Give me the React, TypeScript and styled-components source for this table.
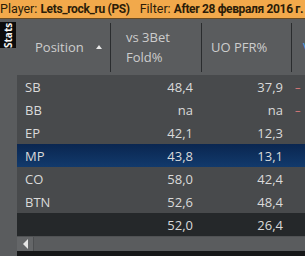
import React from "react";
import styled, { createGlobalStyle } from "styled-components";

const Global = createGlobalStyle`
  html, body { margin: 0; padding: 0; background: #1b1c1d; }
  * { box-sizing: border-box; }
`;

const Frame = styled.div`
  width: 305px;
  height: 256px;
  overflow: hidden;
  display: flex;
  flex-direction: column;
  background: #5a5c5e;
  font-family: "Open Sans", "Noto Sans", sans-serif;
`;

const TopBar = styled.div`
  height: 19px;
  flex: none;
  background: #f2a94b;
  border-bottom: 1px solid #6a4a20;
  color: #2b1c08;
  font-family: Roboto, "Open Sans", sans-serif;
  font-size: 12.5px;
  line-height: 18px;
  white-space: nowrap;
  overflow: hidden;
`;

const Strong = styled.b`
  font-weight: 700;
  font-size: 12px;
  letter-spacing: -0.35px;
`;

const Gap = styled.span`
  display: inline-block;
  width: 10px;
`;

const Body = styled.div`
  flex: 1;
  display: flex;
  min-height: 0;
`;

const Sidebar = styled.div`
  width: 17px;
  flex: none;
  background: #5a5c5e;
  padding-top: 3px;
`;

const StatsTab = styled.div`
  width: 16px;
  height: 26px;
  background: #0c0c0c;
  color: #f4f4f4;
  font-size: 10px;
  font-weight: 700;
  display: flex;
  align-items: center;
  justify-content: center;
  writing-mode: vertical-rl;
  transform: rotate(180deg);
  line-height: 16px;
`;

const Main = styled.div`
  flex: 1;
  display: flex;
  flex-direction: column;
  min-width: 0;
`;

const cols = "94px 91px 90px 1fr";

const HeaderRow = styled.div`
  height: 56px;
  display: grid;
  grid-template-columns: ${cols};
  background: #5a5c5e;
  color: #cdcdcd;
  font-size: 13px;
  line-height: 20px;
`;

const HeadCell = styled.div<{ $divider?: boolean; $pad?: number; $blue?: boolean }>`
  display: flex;
  align-items: center;
  padding-left: ${(p) => p.$pad ?? 8}px;
  white-space: nowrap;
  overflow: hidden;
  color: ${(p) => (p.$blue ? "#4aa0e8" : "inherit")};
  background: ${(p) =>
    p.$divider
      ? "linear-gradient(#2a2c2e, #2a2c2e) right 4px / 1px calc(100% - 7px) no-repeat"
      : "none"};
`;

const SortArrow = styled.span`
  margin-left: 12px;
  width: 0;
  height: 0;
  border-left: 3.5px solid transparent;
  border-right: 3.5px solid transparent;
  border-bottom: 4px solid #e8e8e8;
`;

const Row = styled.div<{ $kind?: "sel" | "total" }>`
  height: 23px;
  display: grid;
  grid-template-columns: ${cols};
  align-items: center;
  font-size: 13px;
  color: #dadada;
  background: ${(p) =>
    p.$kind === "sel"
      ? "linear-gradient(#0a2650, #123a6c)"
      : p.$kind === "total"
      ? "#25282a"
      : "#484a4c"};
`;

const NameCell = styled.div`
  padding-left: 8px;
`;

const NumCell = styled.div`
  text-align: right;
  padding-right: 9px;
`;

const Mark = styled.div`
  padding-left: 3px;
  color: #e27a7a;
  font-size: 11px;
`;

const ScrollBar = styled.div`
  height: 15px;
  flex: none;
  display: flex;
  background: #5a5c5e;
  border-top: 1px solid #505254;
`;

const ArrowButton = styled.div`
  width: 17px;
  display: flex;
  align-items: center;
  justify-content: center;
  background: #646668;
  border-right: 1px solid #4c4e50;
`;

const LeftArrow = styled.span`
  width: 0;
  height: 0;
  border-top: 5px solid transparent;
  border-bottom: 5px solid transparent;
  border-right: 5px solid #e6e6e6;
`;

const BottomEdge = styled.div`
  height: 5px;
  flex: none;
  background: #161718;
`;

const rows = [
  { pos: "SB", a: "48,4", b: "37,9", mark: true },
  { pos: "BB", a: "na", b: "na", mark: true },
  { pos: "EP", a: "42,1", b: "12,3" },
  { pos: "MP", a: "43,8", b: "13,1", sel: true },
  { pos: "CO", a: "58,0", b: "42,4" },
  { pos: "BTN", a: "52,6", b: "48,4" },
];

export default function App() {
  return (
    <>
      <Global />
      <Frame>
        <TopBar>
          Player: <Strong>Lets_rock_ru (PS)</Strong>
          <Gap />
          Filter: <Strong>After 28 февраля 2016 г. (0)</Strong>
        </TopBar>
        <Body>
          <Sidebar>
            <StatsTab>Stats</StatsTab>
          </Sidebar>
          <Main>
            <HeaderRow>
              <HeadCell $divider $pad={18}>
                Position
                <SortArrow />
              </HeadCell>
              <HeadCell $divider $pad={15}>
                vs 3Bet
                <br />
                Fold%
              </HeadCell>
              <HeadCell $divider $pad={9}>
                UO PFR%
              </HeadCell>
              <HeadCell $pad={11} $blue>
                VPIP
              </HeadCell>
            </HeaderRow>
            {rows.map((r) => (
              <Row key={r.pos} $kind={r.sel ? "sel" : undefined}>
                <NameCell>{r.pos}</NameCell>
                <NumCell>{r.a}</NumCell>
                <NumCell>{r.b}</NumCell>
                {r.mark ? <Mark>–</Mark> : <div />}
              </Row>
            ))}
            <Row $kind="total">
              <div />
              <NumCell>52,0</NumCell>
              <NumCell>26,4</NumCell>
              <div />
            </Row>
            <ScrollBar>
              <ArrowButton>
                <LeftArrow />
              </ArrowButton>
            </ScrollBar>
            <BottomEdge />
          </Main>
        </Body>
      </Frame>
    </>
  );
}
